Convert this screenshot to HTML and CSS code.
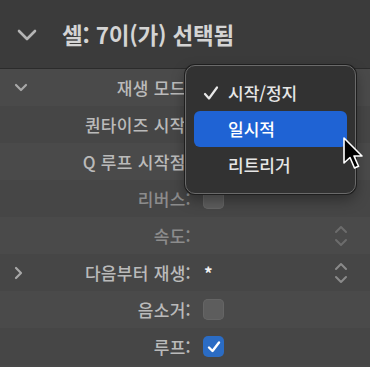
FILE: index.html
```html
<html lang="ko">
<head>
    <meta charset="UTF-8">
    <link rel="stylesheet" href="styles.css">
    <title>Cell Inspector</title>
</head>
<body>
  <div class="panel">
    <div class="header">
      <svg class="chev-big" width="20" height="12" viewBox="0 0 20 12"><path d="M2 2 L10 10 L18 2" fill="none" stroke="#b5b5b5" stroke-width="2.6" stroke-linecap="round" stroke-linejoin="round"/></svg>
      <span class="title">셀: 7이(가) 선택됨</span>
    </div>

    <div class="row light">
      <div class="disclosure"><svg width="14" height="9" viewBox="0 0 14 9"><path d="M2 2 L7 7 L12 2" fill="none" stroke="#a8a8a8" stroke-width="2.2" stroke-linecap="round" stroke-linejoin="round"/></svg></div>
      <div class="label">재생 모드:</div>
      <div class="control"></div>
      <div class="stepper"></div>
    </div>
    <div class="row dark">
      <div class="disclosure"></div>
      <div class="label">퀀타이즈 시작:</div>
      <div class="control"></div>
      <div class="stepper"></div>
    </div>
    <div class="row light">
      <div class="disclosure"></div>
      <div class="label">Q 루프 시작점:</div>
      <div class="control"></div>
      <div class="stepper"></div>
    </div>
    <div class="row dark">
      <div class="disclosure"></div>
      <div class="label dim">리버스:</div>
      <div class="control"><span class="box"></span></div>
      <div class="stepper"></div>
    </div>
    <div class="row light">
      <div class="disclosure"></div>
      <div class="label dim">속도:</div>
      <div class="control"></div>
      <div class="stepper off"><svg width="14" height="22" viewBox="0 0 14 22"><path d="M2 7 L7 2 L12 7 M2 15 L7 20 L12 15" fill="none" stroke="currentColor" stroke-width="2" stroke-linecap="round" stroke-linejoin="round"/></svg></div>
    </div>
    <div class="row dark">
      <div class="disclosure"><svg width="9" height="14" viewBox="0 0 9 14"><path d="M2 2 L7 7 L2 12" fill="none" stroke="#a8a8a8" stroke-width="2.2" stroke-linecap="round" stroke-linejoin="round"/></svg></div>
      <div class="label">다음부터 재생:</div>
      <div class="control"><span class="star">*</span></div>
      <div class="stepper"><svg width="14" height="22" viewBox="0 0 14 22"><path d="M2 7 L7 2 L12 7 M2 15 L7 20 L12 15" fill="none" stroke="currentColor" stroke-width="2" stroke-linecap="round" stroke-linejoin="round"/></svg></div>
    </div>
    <div class="row light">
      <div class="disclosure"></div>
      <div class="label">음소거:</div>
      <div class="control"><span class="box"></span></div>
      <div class="stepper"></div>
    </div>
    <div class="row dark">
      <div class="disclosure"></div>
      <div class="label">루프:</div>
      <div class="control"><span class="box checked"><svg width="16" height="16" viewBox="0 0 16 16"><path d="M3 8.5 L6.5 12 L13 3.5" fill="none" stroke="#fff" stroke-width="2.4" stroke-linecap="round" stroke-linejoin="round"/></svg></span></div>
      <div class="stepper"></div>
    </div>

    <div class="menu">
      <div class="item"><svg class="tick" width="16" height="16" viewBox="0 0 16 16"><path d="M2 9 L6 13.5 L14 2.5" fill="none" stroke="#e8e8e8" stroke-width="2.2" stroke-linecap="round" stroke-linejoin="round"/></svg>시작/정지</div>
      <div class="item active">일시적</div>
      <div class="item">리트리거</div>
    </div>

    <svg class="cursor" width="24" height="36" viewBox="0 0 24 36"><path d="M2 1 L2 26 L8 20.5 L12.5 31 L16.5 29.3 L12 19 L20 19 Z" fill="#000" stroke="#fff" stroke-width="1.6" stroke-linejoin="round"/></svg>
  </div>
</body>
</html>
```

FILE: styles.css
```css
html, body {
  margin: 0;
  padding: 0;
  background: #484848;
  font-family: "Noto Sans CJK KR", "Noto Sans", sans-serif;
}
.panel {
  position: relative;
  width: 370px;
  height: 367px;
  overflow: hidden;
  background: #484848;
}
.header {
  height: 69px;
  background: #3b3b3b;
  border-bottom: 1px solid #2b2b2b;
  display: flex;
  align-items: center;
  box-sizing: border-box;
  padding-left: 17px;
}
.chev-big {
  margin-right: 25px;
  margin-top: 2px;
}
.title {
  color: #d4d4d4;
  font-size: 22.5px;
  font-weight: bold;
  letter-spacing: -0.2px;
}
.row {
  height: 37px;
  display: grid;
  grid-template-columns: 40px 151px 12px 1fr 36px;
  align-items: center;
}
.row.light {
  background: #4a4a4a;
}
.row.dark {
  background: #464646;
}
.disclosure {
  display: flex;
  align-items: center;
  padding-left: 14px;
}
.label {
  grid-column: 2;
  text-align: right;
  color: #bababa;
  font-size: 17px;
  font-weight: 500;
  letter-spacing: 0.3px;
  white-space: nowrap;
}
.label.dim {
  color: #8c8c8c;
}
.control {
  grid-column: 4;
  display: flex;
  align-items: center;
}
.stepper {
  grid-column: 5;
  color: #8a8a8a;
  display: flex;
  align-items: center;
}
.stepper.off {
  color: #6c6c6c;
}
.box {
  width: 21px;
  height: 21px;
  border-radius: 5px;
  background: #5d5d5d;
  box-shadow: inset 0 0 0 1px #656565;
  display: flex;
  align-items: center;
  justify-content: center;
}
.box.checked {
  background: #2b6cc4;
  box-shadow: none;
}
.star {
  color: #f2f2f2;
  font-size: 17px;
  font-weight: bold;
  margin-left: 1px;
}
.menu {
  position: absolute;
  left: 185px;
  top: 65px;
  width: 171px;
  height: 129px;
  box-sizing: border-box;
  background: #323232;
  border: 1px solid #6a6a6a;
  border-radius: 10px;
  box-shadow: 0 0 0 1px #1e1e1e, 0 6px 14px rgba(0, 0, 0, 0.35);
  padding: 9px 8px;
}
.item {
  height: 36px;
  line-height: 36px;
  color: #e6e6e6;
  font-size: 17px;
  font-weight: 500;
  padding-left: 34px;
  position: relative;
  border-radius: 6px;
}
.item.active {
  background: #1f63d4;
  color: #ffffff;
}
.tick {
  position: absolute;
  left: 9px;
  top: 10px;
}
.cursor {
  position: absolute;
  left: 342px;
  top: 137px;
}
```
